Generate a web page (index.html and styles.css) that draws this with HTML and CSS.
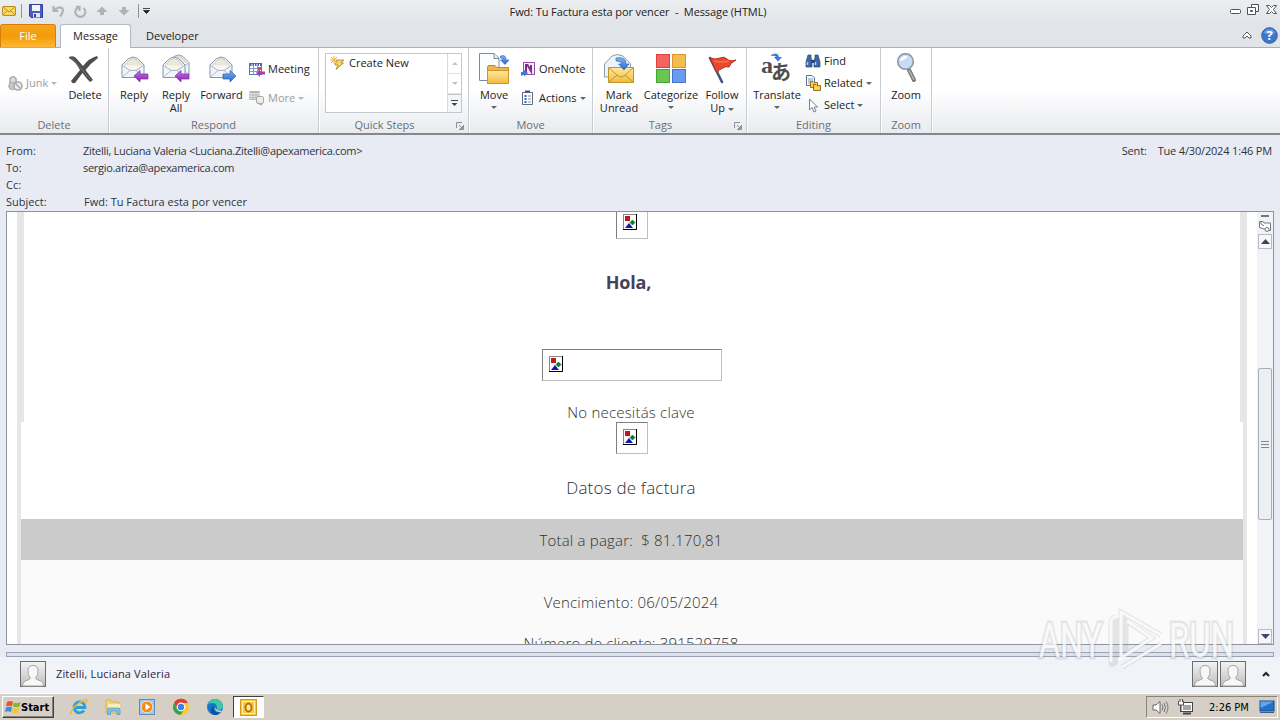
FILE: index.html
```html
<!DOCTYPE html>
<html lang="en">
<head>
    <meta charset="UTF-8">
    <meta name="viewport" content="width=device-width, initial-scale=1.0">
    <title>Fwd: Tu Factura esta por vencer - Message (HTML)</title>
    <link rel="stylesheet" href="styles.css">
</head>
<body>

    <!-- shared icons -->
    <svg class="defs" width="0" height="0">
        <defs>
            <linearGradient id="gold" x1="0" y1="0" x2="0" y2="1"><stop offset="0" stop-color="#ffe9a0"/><stop offset="1" stop-color="#f3ba3c"/></linearGradient>
            <linearGradient id="purple" x1="0" y1="0" x2="0" y2="1"><stop offset="0" stop-color="#c07be0"/><stop offset="1" stop-color="#8a1fb4"/></linearGradient>
            <linearGradient id="blue" x1="0" y1="0" x2="0" y2="1"><stop offset="0" stop-color="#7db4f4"/><stop offset="1" stop-color="#2a66cc"/></linearGradient>
            <linearGradient id="grey" x1="0" y1="0" x2="0" y2="1"><stop offset="0" stop-color="#f4f4f4"/><stop offset="1" stop-color="#bdbdbd"/></linearGradient>
            <symbol id="envelope" viewBox="0 0 24 24">
                <path d="M1 9 7.500 2.500Q12-.5 16.500 2.500L23 9V21.500H1Z" fill="#f1f5fb" stroke="#8695ad"/>
                <path d="M3 10 8 4Q12 1 16 4L21 10 15 14H9Z" fill="#eae8d8" stroke="#c9c5b2" stroke-width=".8"/>
                <path d="M1.500 9.500 9 14.500H15L22.500 9.500M1.500 21 9 14.500M22.500 21 15 14.500" fill="#fff" fill-opacity=".6" stroke="#9aabc4" stroke-width=".8"/>
            </symbol>
            <symbol id="noimg" viewBox="0 0 14 16">
                <rect x=".5" y=".5" width="13" height="15" fill="#fff" stroke="#888"/>
                <path d="M13.500 0V15.500H0" fill="none" stroke="#000"/>
                <rect x="2" y="2" width="5" height="5" fill="#c01818"/>
                <path d="M7 8.500 9.500 6 12 8.500 9.500 11Z" fill="#107a2c" stroke="#107a2c" stroke-width=".7"/>
                <path d="M2 14 6 9 10 14Z" fill="#1414b4"/>
            </symbol>
            <symbol id="person" viewBox="0 0 26 26">
                <rect x=".5" y=".5" width="25" height="25" fill="url(#grey)" stroke="#6d6d6d"/>
                <path d="M2.500 25Q2.500 20 8 19L10.500 17.500Q7.500 14 8 9 8.500 4.500 13 4.500T18 9Q18.500 14 15.500 17.500L18 19Q23.500 20 23.500 25Z" fill="#f7f7f7" stroke="#a5a5a5"/>
            </symbol>
            <symbol id="launcher" viewBox="0 0 8 8">
                <path d="M.5 6V.5H6M3 3 6 6M7.500 3V7.500H3M6.500 4V6.500H4" fill="none" stroke="#8a9099"/>
            </symbol>
        </defs>
    </svg>

    <div class="window">

        <header class="titlebar">
            <div class="quick-access">
                <svg width="14" height="12" viewBox="0 0 14 12"><rect x=".5" y="1.500" width="13" height="9" rx="1" fill="#fbd862" stroke="#b88c1c"/><path d="M1 2 7 7 13 2M1 10 5 6M13 10 9 6" fill="none" stroke="#c48e1c"/></svg>
                <i class="bar"></i>
                <svg class="save" width="14" height="14" viewBox="0 0 14 14"><path d="M.5.5H13.500V13.500H2L.5 12Z" fill="#4a5cc6" stroke="#30409a"/><rect x="3" y="1" width="8" height="6" fill="#f4f7ff"/><rect x="4" y="9" width="7" height="4.500" fill="#dfe4f4"/><rect x="5" y="10" width="2" height="3" fill="#30409a"/></svg>
                <svg class="undo" width="13" height="13" viewBox="0 0 13 13"><path d="M1.500 1V6H6.500M2 5.500Q6 1 10 3 12.500 6 8 11.500" fill="none" stroke="#b0b2b5" stroke-width="2.200"/></svg>
                <svg class="redo" width="13" height="13" viewBox="0 0 13 13"><path d="M4 2.500A5 5 0 1 0 9.500 3M2 1.800H5.500V6" fill="none" stroke="#b0b2b5" stroke-width="2.200"/></svg>
                <svg class="up" width="12" height="10" viewBox="0 0 12 10"><path d="M6 .5 11.500 6H8V9H4V6H.5Z" fill="#b0b2b5"/></svg>
                <svg class="down" width="12" height="10" viewBox="0 0 12 10"><path d="M6 9.500 11.500 4H8V1H4V4H.5Z" fill="#b0b2b5"/></svg>
                <i class="bar"></i>
                <svg class="customize" width="7" height="6" viewBox="0 0 7 6"><path d="M0 .5H7M.5 2.500H6.500L3.500 5.500Z" fill="#222" stroke="#222" stroke-width=".8"/></svg>
            </div>
            <h1 class="title">Fwd: Tu Factura esta por vencer &nbsp;- &nbsp;Message (HTML)</h1>
            <div class="window-buttons">
                <svg width="48" height="14" viewBox="0 0 48 14" fill="#fff" stroke="#4c5460"><rect x="1.500" y="7.500" width="10" height="4" rx="1"/><path d="M22.500 2.500H29.500V9.500H22.500Z"/><path d="M18.500 5.500H26.500V12.500H18.500ZM21.500 8.500H23.500V9.500H21.500Z"/><path d="M37.500 3.500H40.500L42.500 5.500 44.500 3.500H47.500L44.500 7.500 47.500 11.500H44.500L42.500 9.500 40.500 11.500H37.500L40.500 7.500Z"/></svg>
            </div>
        </header>

        <nav class="tabs">
            <div class="tab file">File</div>
            <div class="tab active">Message</div>
            <div class="tab">Developer</div>
            <div class="help">
                <svg width="10" height="8" viewBox="0 0 10 8"><path d="M5 1 9 5V7H7L5 5 3 7H1V5Z" fill="#fff" stroke="#555"/></svg>
                <svg width="17" height="17" viewBox="0 0 17 17"><circle cx="8.500" cy="8.500" r="7.800" fill="#3b77cc" stroke="#2d5fae"/><path d="M2.500 6A6.500 6.500 0 0 1 14.500 6Q9 9 2.500 6Z" fill="#7eabea" opacity=".6"/><text x="8.500" y="13.300" text-anchor="middle" class="help-mark">?</text></svg>
            </div>
        </nav>

        <section class="ribbon">
            <div class="group g-delete">
                <div class="tools">
                    <div class="small-col middle junk">
                        <div class="small off">
                            <svg width="15" height="16" viewBox="0 0 15 16"><path d="M2 9V3.500Q5 0 8 3.500V7" fill="#ddd" stroke="#aaa" stroke-width="1.500"/><circle cx="4.500" cy="11" r="3.800" fill="#c8c8c8" stroke="#aaa"/><circle cx="10" cy="11" r="4" fill="#eee" stroke="#aaa" stroke-width="1.600"/><path d="M7.500 8.500 12.500 13.500" stroke="#aaa" stroke-width="1.600"/></svg>
                            <span>Junk</span><i class="caret"></i>
                        </div>
                    </div>
                    <div class="big b-delete">
                        <svg width="32" height="32" viewBox="0 0 32 32"><path d="M2 4Q6 2 9 5L16 13Q22 5 30 3L31 5Q24 10 18.500 17L26 27 23 29Q19 25 15.500 20L8 30Q5 31 4 28L13 17Q8 8 2 5Z" fill="#4d4d4d"/><path d="M4 4 24 27" stroke="#777" stroke-width=".8"/></svg>
                        <span>Delete</span>
                    </div>
                </div>
                <div class="label">Delete</div>
            </div>

            <div class="group g-respond">
                <div class="tools">
                    <div class="big b-reply">
                        <svg width="32" height="32" viewBox="0 0 32 32"><use href="#envelope" x="3" y="3" width="24" height="24"/><path d="M16 23 22 17.500V21H30V26H22V29Z" fill="url(#purple)" stroke="#7c2da0" stroke-width=".7"/></svg>
                        <span>Reply</span>
                    </div>
                    <div class="big b-all">
                        <svg width="32" height="32" viewBox="0 0 32 32"><use href="#envelope" x="7" y="1" width="23" height="23"/><use href="#envelope" x="2" y="3" width="24" height="24"/><path d="M15 23 21 17.500V21H29V26H21V29Z" fill="url(#purple)" stroke="#7c2da0" stroke-width=".7"/></svg>
                        <span>Reply<br>All</span>
                    </div>
                    <div class="big b-forward">
                        <svg width="32" height="32" viewBox="0 0 32 32"><use href="#envelope" x="3" y="3" width="24" height="24"/><path d="M30 23 24 17.500V21H17V26H24V29Z" fill="url(#blue)" stroke="#2c5da9" stroke-width=".7"/></svg>
                        <span>Forward</span>
                    </div>
                    <div class="small-col two">
                        <div class="small">
                            <svg width="16" height="16" viewBox="0 0 16 16"><rect x=".5" y="2.500" width="12" height="11" fill="#fff" stroke="#5577bb"/><path d="M1 3.500H12.500" stroke="#3d63b0" stroke-width="3" stroke-dasharray="1.500 1"/><path d="M1 7.500H12M1 10.500H12M4.500 5V13M8.500 5V13" stroke="#7f9cd0"/><path d="M7 12 11 8V10.500H16V13.500H11V16Z" fill="#a43cc0"/><rect x="9" y="6" width="3" height="3" fill="#e24444"/></svg>
                            <span>Meeting</span>
                        </div>
                        <div class="small off">
                            <svg width="16" height="16" viewBox="0 0 16 16"><rect x="1" y="1.500" width="9" height="8" fill="#eee" stroke="#b5b5b5"/><path d="M1 2.500H10M1 5H10M1 7.500H10M4 2V10M7 2V10" stroke="#b5b5b5"/><rect x="7.500" y="6.500" width="7" height="7" rx="1.500" fill="#eee" stroke="#aaa"/><path d="M9 13 13 15" stroke="#aaa" stroke-width="1.500"/></svg>
                            <span>More</span><i class="caret"></i>
                        </div>
                    </div>
                </div>
                <div class="label">Respond</div>
            </div>

            <div class="group g-steps">
                <div class="tools">
                    <div class="gallery">
                        <div class="gallery-item">
                            <svg width="15" height="14" viewBox="0 0 15 14"><path d="M4 0V8M0 4H8M1 1 7 7M7 1 1 7" stroke="#efb52a"/><path d="M7 4 14 4 11 7 13.500 7 6 13.500 8 9H5Z" fill="#f8d45e" stroke="#a6842c" stroke-width=".8"/></svg>
                            <span>Create New</span>
                        </div>
                        <div class="gallery-scroll">
                            <div><i class="caret flip"></i></div>
                            <div><i class="caret"></i></div>
                            <div class="more"><svg width="7" height="7" viewBox="0 0 7 7"><path d="M0 .5H7" stroke="#444"/><path d="M.5 3H6.500L3.500 6Z" fill="#444"/></svg></div>
                        </div>
                    </div>
                </div>
                <div class="label with-launch">Quick Steps<svg class="launch" width="8" height="8"><use href="#launcher"/></svg></div>
            </div>

            <div class="group g-move">
                <div class="tools">
                    <div class="big b-move">
                        <svg width="32" height="32" viewBox="0 0 32 32"><path d="M1.500.5H16L21 5V27.500H1.500Z" fill="#fcfdff" stroke="#7c8ba2"/><path d="M16 .5V5.500H21" fill="#e8eef8" stroke="#7c8ba2"/><path d="M9.500 14.500Q9.500 12.500 11 12.500H17L19 14.500H30.500V30.500H9.500Z" fill="#eeb54c" stroke="#c48728"/><path d="M9.500 17.500H30.500V30.500H9.500Z" fill="url(#gold)" stroke="#cf942f"/><path d="M22.500 3Q28 1 28 7H31L27 11.500 22.500 7H25Q25 5 22.500 5Z" fill="url(#blue)" stroke="#2b63b8" stroke-width=".6"/></svg>
                        <span>Move</span><i class="caret"></i>
                    </div>
                    <div class="small-col two">
                        <div class="small">
                            <svg width="16" height="16" viewBox="0 0 16 16"><rect x="3.500" y="1.500" width="11" height="12" fill="#f7ecfa" stroke="#9b4fa6"/><path d="M6 11.500V4H7.500L11 10V4" fill="none" stroke="#85288f" stroke-width="2"/><path d="M1 15V11H4V9L8 12 4 15.500V13.500" fill="#3f7bd8"/></svg>
                            <span>OneNote</span>
                        </div>
                        <div class="small">
                            <svg width="16" height="16" viewBox="0 0 16 16"><path d="M2.500 2.500H12.500V14.500H2.500Z" fill="#fff" stroke="#5e6e88"/><path d="M5 1.500H10" stroke="#46566e" stroke-width="2"/><path d="M4.500 6H6.500M4.500 9H6.500M4.500 12H6.500" stroke="#3566b4" stroke-width="1.800"/><path d="M8 6H11M8 9H11M8 12H11" stroke="#889"/></svg>
                            <span>Actions</span><i class="caret"></i>
                        </div>
                    </div>
                </div>
                <div class="label">Move</div>
            </div>

            <div class="group g-tags">
                <div class="tools">
                    <div class="big b-unread">
                        <svg width="32" height="32" viewBox="0 0 32 32"><path d="M1.500 11 9 3Q14 0 20 3L27.500 11V24H1.500Z" fill="#eef3fa" stroke="#8c9bb2"/><path d="M5.500 14.500H30.500V29.500H5.500Z" fill="url(#gold)" stroke="#c2952c"/><path d="M6 15 15 23Q18 25 21 23L30 15M6 29 14 22M30 29 22 22" fill="none" stroke="#c2952c"/><path d="M13 5Q23 3 23 11H26L21 17 15.500 11H18.500Q18 8 13 8Z" fill="url(#blue)" stroke="#2b63b8" stroke-width=".6"/></svg>
                        <span>Mark<br>Unread</span>
                    </div>
                    <div class="big b-cat">
                        <svg width="32" height="32" viewBox="0 0 32 32"><rect x="1.500" y="1.500" width="13" height="13" fill="#f16460" stroke="#e04038"/><rect x="17.500" y="1.500" width="13" height="13" fill="#f5bd50" stroke="#df9628"/><rect x="1.500" y="16.500" width="13" height="13" fill="#6ac552" stroke="#44a52f"/><rect x="17.500" y="16.500" width="13" height="13" fill="#6b9bee" stroke="#4474d0"/></svg>
                        <span>Categorize</span><i class="caret"></i>
                    </div>
                    <div class="big b-follow">
                        <svg width="32" height="32" viewBox="0 0 32 32"><path d="M4 5 16 29" stroke="#3d567f" stroke-width="2.600" stroke-linecap="round"/><path d="M4 5Q10 7 14 5T21 6 30 7Q24 10 23 14 19 13 17 15 13 16 11 20Z" fill="#e9482c" stroke="#b52d1b"/><path d="M8 8Q16 10 23 8" fill="none" stroke="#f8744f" stroke-width="1.500"/></svg>
                        <span>Follow<br>Up <i class="caret"></i></span>
                    </div>
                </div>
                <div class="label with-launch">Tags<svg class="launch" width="8" height="8"><use href="#launcher"/></svg></div>
            </div>

            <div class="group g-editing">
                <div class="tools">
                    <div class="big b-translate">
                        <div class="translate-icon">
                            <span class="glyph-a">a</span><span class="glyph-ja">あ</span>
                            <svg class="glyph-arrow" width="12" height="9" viewBox="0 0 12 9"><path d="M0 2Q7-2 8 4H11L7 8.500 3 4H5Q4 2 0 3Z" fill="#3d7bd6"/></svg>
                        </div>
                        <span>Translate</span><i class="caret"></i>
                    </div>
                    <div class="small-col three">
                        <div class="small">
                            <svg width="16" height="16" viewBox="0 0 16 16"><path d="M3 2H6V5L7 7V14H1V9ZM10 2H13L15 9V14H9V7L10 5Z" fill="#3f66a4" stroke="#27497f" stroke-width=".7"/><path d="M6 7H10V10H6Z" fill="#27497f"/><path d="M2.500 9V12M10.500 9V12" stroke="#b9d0f2" stroke-width="1.500"/></svg>
                            <span>Find</span>
                        </div>
                        <div class="small">
                            <svg width="16" height="16" viewBox="0 0 16 16"><path d="M1.500.5H7L9.500 3V10.500H1.500Z" fill="#fff" stroke="#58719c"/><path d="M3 4H8M3 6H8M3 8H8" stroke="#7b95c2"/><path d="M5.500 6.500H8L9 7.500H12.500V12.500H5.500Z" fill="#f7cf58" stroke="#9b7112"/><path d="M8.500 9.500H11L12 10.500H15.500V15.500H8.500Z" fill="#f7cf58" stroke="#9b7112"/></svg>
                            <span>Related</span><i class="caret"></i>
                        </div>
                        <div class="small">
                            <svg width="16" height="16" viewBox="0 0 16 16"><path d="M4.500 2V13L7 10.500 9 15 11 14 9 10H12.500Z" fill="#fff" stroke="#6f8099"/></svg>
                            <span>Select</span><i class="caret"></i>
                        </div>
                    </div>
                </div>
                <div class="label">Editing</div>
            </div>

            <div class="group g-zoom">
                <div class="tools">
                    <div class="big b-zoom">
                        <svg width="32" height="32" viewBox="0 0 32 32"><path d="M19 17 24 27" stroke="#747474" stroke-width="4" stroke-linecap="round"/><path d="M19 17 24 27" stroke="#b8b8b8" stroke-width="1.500"/><circle cx="15.500" cy="8.500" r="7.800" fill="#c6dcf6" stroke="#8d97a5" stroke-width="1.600"/><path d="M10 8A5.500 5.500 0 0 1 18 3.500Q13 8 10 8Z" fill="#fff"/></svg>
                        <span>Zoom</span>
                    </div>
                </div>
                <div class="label">Zoom</div>
            </div>
        </section>

        <section class="headers">
            <dl>
                <dt>From:</dt><dd class="from">Zitelli, Luciana Valeria &lt;Luciana.Zitelli@apexamerica.com&gt;</dd>
                <dt>To:</dt><dd class="to">sergio.ariza@apexamerica.com</dd>
                <dt>Cc:</dt><dd></dd>
                <dt>Subject:</dt><dd class="subject">Fwd: Tu Factura esta por vencer</dd>
            </dl>
            <div class="sent"><span>Sent:</span><span>Tue 4/30/2024 1:46 PM</span></div>
        </section>

        <main class="reader">
            <div class="mail">
                <div class="mail-top">
                    <div class="placeholder first"><svg width="14" height="16"><use href="#noimg"/></svg></div>
                    <h2>Hola,</h2>
                    <div class="placeholder wide"><svg width="14" height="16"><use href="#noimg"/></svg></div>
                    <p class="clave">No necesitás clave</p>
                </div>
                <div class="mail-data">
                    <div class="placeholder"><svg width="14" height="16"><use href="#noimg"/></svg></div>
                    <h3>Datos de factura</h3>
                    <p class="total">Total a pagar: &nbsp;$ 81.170,81</p>
                    <div class="details">
                        <p class="due">Vencimiento: 06/05/2024</p>
                        <p class="client">Número de cliente: 391529758</p>
                    </div>
                </div>
            </div>
            <div class="scrollbar">
                <div class="split"></div>
                <svg class="ruler" width="14" height="13" viewBox="0 0 14 13"><path d="M1.500 1.500H5L6 3H12.500V10.500H9L8 9 6 9 1.500 7.500Z" fill="#fff" stroke="#707884"/><path d="M3 1V4L6 6" fill="none" stroke="#707884"/><circle cx="9" cy="9.500" r="2" fill="#fff" stroke="#707884"/></svg>
                <div class="arrow"><svg width="9" height="5"><path d="M0 5 4.500 0 9 5Z" fill="#3f4650"/></svg></div>
                <div class="track"><div class="thumb"><i></i><i></i><i></i></div></div>
                <div class="arrow"><svg width="9" height="5"><path d="M0 0 4.500 5 9 0Z" fill="#3c4a66"/></svg></div>
            </div>
        </main>

        <div class="splitter"></div>

        <section class="people">
            <svg width="26" height="26"><use href="#person"/></svg>
            <span>Zitelli, Luciana Valeria</span>
            <div class="people-list">
                <svg width="26" height="26"><use href="#person"/></svg>
                <svg width="26" height="26"><use href="#person"/></svg>
                <svg class="expand" width="8" height="6" viewBox="0 0 8 6"><path d="M1 5 4 2 7 5" fill="none" stroke="#222" stroke-width="2"/></svg>
            </div>
        </section>

        <footer class="taskbar">
            <div class="start">
                <svg width="16" height="16" viewBox="0 0 16 16"><path d="M2 3Q5 1 8 3L7 7.500Q4 6 1 7.500Z" fill="#e8562a"/><path d="M9 3.500Q12 5 15.500 3L14.500 7.500Q11 9 8 7.500Z" fill="#7db935"/><path d="M1 8.500Q4 7 7 8.500L6 13Q3 11.500 0 13Z" fill="#3f8ae0"/><path d="M8 9Q11 10.500 14.500 8.500L13 13.500Q10 15 7 13.500Z" fill="#f8c22c"/></svg>
                <span>Start</span>
            </div>
            <div class="launchers">
                <svg width="18" height="18" viewBox="0 0 18 18"><path d="M14 12.500A5.500 5.500 0 1 1 15 9.500H4.500" fill="none" stroke="#2f9fdc" stroke-width="2.800"/><path d="M1 16.500Q0 12 8 6T17 2Q16 5 15 6" fill="none" stroke="#eebc34" stroke-width="1.500"/></svg>
                <svg width="18" height="18" viewBox="0 0 18 18"><path d="M2 2H7L8 4H15V15H2Z" fill="#f1d47a" stroke="#cfa648" stroke-width=".7"/><path d="M4 6H16V10H4Z" fill="#fbeeb5"/><path d="M3.500 16.500V11.500Q3.500 10 5 10H14Q16 10 16 12V16.500H13V13H6.500V16.500Z" fill="#7cc2e8" stroke="#4798c4" stroke-width=".7"/></svg>
                <svg width="18" height="18" viewBox="0 0 18 18"><rect x="1.500" y="1.500" width="15" height="15" fill="#a3c8ea" stroke="#5b8cb8"/><circle cx="9" cy="9" r="5.800" fill="#f38c1c" stroke="#fff" stroke-width=".6"/><path d="M7.500 5.500 12.500 9 7.500 12.500Z" fill="#fff"/></svg>
                <svg width="18" height="18" viewBox="0 0 18 18"><circle cx="9" cy="9" r="8" fill="#f9cb28"/><path d="M2 5A8 8 0 0 1 16 5H9L5.500 11Z" fill="#df3e30"/><path d="M2 5A8 8 0 0 0 8.500 17L12.500 11H5.500Z" fill="#37a350"/><circle cx="9" cy="9" r="3.800" fill="#3f7fea" stroke="#fff" stroke-width="1.200"/></svg>
                <svg width="18" height="18" viewBox="0 0 18 18"><circle cx="9" cy="9" r="8" fill="#1876c5"/><path d="M1.500 7Q4 1 9 1 16 1 17 8 17 12 12 12 10 12 11 10 11 5 6 5 3 5 1.500 7Z" fill="#3fc7a9"/><path d="M8 8Q6 12 10 14 13 15 15 13.500 12 18 7 16.500 3 14 6 9Z" fill="#104f9c"/><path d="M9 9Q9.500 13 16 12.800L15 14Q12 14.500 10 13 8 11.500 9 9Z" fill="#d5cfc5"/></svg>
                <div class="running">
                    <svg width="17" height="17" viewBox="0 0 17 17"><rect x=".5" y=".5" width="16" height="16" fill="#f9c63c" stroke="#d79a1c"/><rect x="2.500" y="2.500" width="12" height="12" fill="none" stroke="#fff0b6"/><ellipse cx="8.500" cy="8.500" rx="3" ry="4" fill="#fce9a0" stroke="#b06c08" stroke-width="1.800"/></svg>
                </div>
            </div>
            <div class="tray">
                <svg width="17" height="15" viewBox="0 0 17 15"><path d="M1 5H4L8 1.500V13.500L4 10H1Z" fill="#fff" stroke="#666"/><path d="M10 4.500Q12 7.500 10 10.500M12 3Q15 7.500 12 12M14 1.500Q18 7.500 14 13.500" fill="none" stroke="#777"/></svg>
                <svg width="17" height="16" viewBox="0 0 17 16"><rect x="3.500" y="3.500" width="12" height="9" fill="#fff" stroke="#444"/><rect x="6" y="6" width="8" height="5" fill="#a5a5a5"/><path d="M6 14.500H14" stroke="#444" stroke-width="2"/><path d="M1.500 2V6H6.500V2M3 0V3M5.500 0V3M4 6V13" fill="#fff" stroke="#555"/></svg>
                <span class="clock">2:26 PM</span>
                <svg width="16" height="14" viewBox="0 0 16 14"><rect x="1" y="1" width="14" height="10" fill="#2472c8" stroke="#17498a"/><path d="M1.500 8 14 2V1.500H1.500Z" fill="#5fa8ec"/><path d="M1 12.500H15" stroke="#3b5c88"/></svg>
            </div>
        </footer>

        <svg class="watermark" width="200" height="66" viewBox="0 0 200 66">
            <g class="wm-shade">
                <text x="3" y="49" textLength="63" lengthAdjust="spacingAndGlyphs">ANY</text>
                <text x="133" y="49" textLength="65" lengthAdjust="spacingAndGlyphs">RUN</text>
                <path d="M80 9Q75 10 75 14V54Q75 59 80 54V10M85 50V4L125 27M90 47V13L116 30 90 46M125 36 86 59"/>
            </g>
            <g class="wm-light">
                <text x="3" y="49" textLength="63" lengthAdjust="spacingAndGlyphs">ANY</text>
                <text x="133" y="49" textLength="65" lengthAdjust="spacingAndGlyphs">RUN</text>
                <path d="M80 9Q75 10 75 14V54M85 50V4L125 27M91 13 116 30 82 52M125 36 86 59"/>
            </g>
        </svg>
    </div>

</body>
</html>
```
FILE: styles.css
```css
* {
    box-sizing: border-box;
    margin: 0;
    padding: 0;
}

body {
    font-family: "Open Sans", "Noto Sans", sans-serif;
    font-size: 11px;
    line-height: 13px;
    color: #222;
    overflow: hidden;
}

svg {
    display: block;
    flex-shrink: 0;
}

.defs {
    position: absolute;
}

.window {
    position: relative;
    width: 1280px;
    height: 720px;
    display: flex;
    flex-direction: column;
    background: #e8ebf3;
    overflow: hidden;
}

/* title bar */
.titlebar {
    height: 24px;
    display: grid;
    grid-template-columns: 260px 1fr 260px;
    align-items: center;
    background: linear-gradient(#eceef1, #e1e4e8);
}

.quick-access {
    display: flex;
    align-items: center;
    padding: 0 0 2px 2px;
}

.bar {
    width: 1px;
    height: 14px;
    margin: 0 7px 0 5px;
    background: #8e9299;
}

.undo { margin-left: 9px; }
.redo { margin-left: 9px; }
.up { margin-left: 9px; }
.down { margin-left: 10px; margin-right: 3px; }
.customize { margin-left: -3px; }

.title {
    font-size: 11px;
    font-weight: normal;
    text-align: center;
    letter-spacing: -0.1px;
    padding: 0 4px 2px 0;
}

.window-buttons {
    display: flex;
    justify-content: flex-end;
    padding: 0 3px 7px 0;
}

/* tabs */
.tabs {
    height: 24px;
    display: flex;
    background: #e1e4e8;
    border-bottom: 1px solid #a9adb4;
}

.tab {
    height: 23px;
    line-height: 23px;
    padding: 0 15px;
}

.tab.file {
    width: 56px;
    margin-right: 4px;
    color: #fff;
    text-align: center;
    background: linear-gradient(#f6a51f, #f49a08 50%, #fdb735);
    border: 1px solid #d97d0a;
    border-bottom: none;
    border-radius: 3px 3px 0 0;
    line-height: 22px;
}

.tab.active {
    width: 71px;
    height: 24px;
    padding: 0;
    text-align: center;
    line-height: 22px;
    background: #fff;
    border: 1px solid #b4b8bf;
    border-bottom: none;
    border-radius: 3px 3px 0 0;
}

.help {
    margin-left: auto;
    display: flex;
    align-items: center;
    gap: 9px;
    padding: 0 2px 1px 0;
}

.help-mark {
    font: bold 13px "Open Sans", sans-serif;
    fill: #fff;
}

/* ribbon */
.ribbon {
    height: 87px;
    display: flex;
    background: linear-gradient(#fff 0, #fff 48%, #eff1f4 84%, #e8eaee);
    border-bottom: 2px solid #83878e;
}

.group {
    display: flex;
    flex-direction: column;
    border-right: 1px solid #c9ccd1;
    box-shadow: 1px 0 #fff;
}

.g-delete { width: 109px; }
.g-respond { width: 210px; }
.g-steps { width: 150px; }
.g-move { width: 124px; }
.g-tags { width: 154px; }
.g-editing { width: 134px; }
.g-zoom { width: 51px; }

.tools {
    height: 70px;
    display: flex;
    padding-top: 5px;
}

.label {
    display: flex;
    justify-content: center;
    position: relative;
    color: #6a7078;
    height: 14px;
}

.label.with-launch {
    padding-right: 18px;
}

.launch {
    position: absolute;
    right: 4px;
    top: 4px;
}

.big {
    display: flex;
    flex-direction: column;
    align-items: center;
    text-align: center;
}

.big > svg,
.translate-icon {
    margin-bottom: 3px;
}

.big span {
    white-space: nowrap;
}

.b-delete { width: 44px; margin-left: 1px; }
.b-delete > svg { margin-left: -4px; }
.b-reply { width: 42px; margin-left: 4px; }
.b-all { width: 42px; }
.b-forward { width: 49px; }
.b-move { width: 46px; margin-left: 2px; }
.b-unread { width: 48px; margin-left: 2px; }
.b-cat { width: 56px; }
.b-follow { width: 46px; }
.b-translate { width: 56px; margin-left: 2px; }
.b-zoom { width: 50px; }

.big > .caret {
    margin-top: 5px;
}

.caret {
    display: inline-block;
    border: 3px solid transparent;
    border-top-color: #666;
    border-bottom: none;
    vertical-align: middle;
}

.caret.flip {
    transform: rotate(180deg);
}

.small-col {
    display: flex;
    flex-direction: column;
    height: 60px;
}

.small-col.middle { justify-content: center; }

.small-col.two {
    padding-top: 8px;
    gap: 13px;
    margin-left: 3px;
}

.small-col.three {
    gap: 6px;
}

.small {
    display: flex;
    align-items: center;
    height: 16px;
    gap: 3px;
    white-space: nowrap;
}

.small span {
    padding-bottom: 2px;
}

.junk { margin-left: 8px; width: 54px; }

.off { color: #9b9b9b; }
.off .caret { border-top-color: #b5b5b5; }

.gallery {
    width: 137px;
    height: 60px;
    margin-left: 6px;
    display: flex;
    background: #fff;
    border: 1px solid #c3c7cd;
}

.gallery-item {
    flex: 1;
    display: flex;
    gap: 4px;
    padding: 2px 4px;
    white-space: nowrap;
}

.gallery-scroll {
    width: 14px;
    display: grid;
    grid-template-rows: 20px 20px 1fr;
    border-left: 1px solid #d8dade;
}

.gallery-scroll div {
    display: flex;
    align-items: center;
    justify-content: center;
    border-bottom: 1px solid #e0e2e5;
}

.gallery-scroll .caret { border-top-color: #c0c3c8; }

.gallery-scroll .more {
    background: #f4f5f7;
    border: 1px solid #c3c7cd;
    border-width: 1px 0 0;
}

/* the two letters overlap diagonally under a small arrow */
.translate-icon {
    position: relative;
    width: 32px;
    height: 32px;
    color: #4e4e4e;
}

.glyph-a,
.glyph-ja,
.glyph-arrow {
    position: absolute;
}

.glyph-a {
    left: 0;
    top: 0;
    font: bold 24px/24px "Liberation Serif", serif;
}

.glyph-ja {
    left: 10px;
    top: 6px;
    font: bold 20px/26px "Noto Sans CJK JP", sans-serif;
}

.glyph-arrow {
    left: 10px;
    top: 0;
}

/* message headers */
.headers {
    height: 76px;
    display: flex;
    justify-content: space-between;
    padding: 7px 8px 0 6px;
    color: #2e3440;
}

.headers dl {
    display: grid;
    grid-template-columns: 77px 1fr;
    grid-auto-rows: 17px;
    line-height: 17px;
}

.from { letter-spacing: -0.3px; }
.to { letter-spacing: -0.3px; }
.subject { padding-left: 1px; }

.sent {
    display: flex;
    gap: 11px;
    line-height: 17px;
    letter-spacing: -0.17px;
}

/* reading area */
.reader {
    width: 1268px;
    height: 434px;
    margin-left: 6px;
    display: flex;
    justify-content: space-between;
    background: #fff;
    border: 1px solid #8e939c;
    overflow: hidden;
}

.mail {
    width: 1230px;
    margin-left: 10px;
    text-align: center;
    color: #303030;
    font-size: 15px;
    font-weight: 300;
    letter-spacing: 0.2px;
    line-height: 20px;
}

.mail p {
    padding-right: 2px;
}

.mail-top {
    height: 210px;
    border: solid #e6e6e6;
    border-width: 0 7px;
}

.mail-data {
    border: solid #e6e6e6;
    border-width: 0 4px;
}

.placeholder {
    width: 32px;
    height: 32px;
    margin: 0 auto;
    padding: 6px;
    border: 1px solid #bfbfbf;
    border-top-color: #808080;
    border-left-color: #808080;
}

.placeholder.first {
    height: 27px;
    padding-top: 2px;
    border-top: none;
}

.placeholder.wide {
    width: 180px;
}

.mail h2 {
    margin: 33px 7px 57px 0;
    font-size: 18px;
    font-weight: bold;
    letter-spacing: -0.2px;
    color: #45415a;
}

.clave { margin-top: 21px; }

.mail h3 {
    margin: 24px 0 21px;
    padding-right: 2px;
    font-size: 17px;
    font-weight: 300;
}

.total {
    height: 41px;
    line-height: 43px;
    background: #cbcbcb;
}

.details {
    height: 200px;
    padding-top: 32px;
    background: #fafafa;
}

.client { margin-top: 21px; }

.scrollbar {
    width: 16px;
    display: flex;
    flex-direction: column;
    align-items: center;
    background: #f1f3f6;
}

.split {
    width: 8px;
    height: 2px;
    margin: 3px 0;
    background: #727983;
}

.ruler { margin-bottom: 1px; }

.arrow {
    width: 14px;
    height: 15px;
    display: flex;
    align-items: center;
    justify-content: center;
    background: #f5f7fa;
    border: 1px solid #b6bbc4;
}

.track {
    flex: 1;
    padding-top: 119px;
}

.thumb {
    width: 14px;
    height: 152px;
    display: flex;
    flex-direction: column;
    align-items: center;
    justify-content: center;
    gap: 2px;
    background: #eceff3;
    border: 1px solid #a9afb8;
    border-radius: 2px;
}

.thumb i {
    width: 8px;
    height: 1px;
    background: #828892;
}

.splitter {
    width: 1268px;
    height: 5px;
    margin: 7px 0 0 6px;
    background: #dce1ea;
    border: 1px solid #9ba2b4;
}

/* people pane */
.people {
    height: 36px;
    display: flex;
    align-items: center;
    gap: 10px;
    padding: 0 10px 2px 20px;
    background: #f0f3f7;
    color: #301c40;
}

.people span {
    padding-bottom: 1px;
    letter-spacing: 0.15px;
}

.people-list {
    margin-left: auto;
    display: flex;
    align-items: center;
    gap: 2px;
}

.expand { margin-left: 14px; }

/* taskbar */
.taskbar {
    height: 27px;
    display: flex;
    align-items: center;
    background: #d5cfc5;
    border-top: 1px solid #fff;
    font-family: "DejaVu Sans Condensed", "DejaVu Sans", sans-serif;
    color: #000;
}

.start {
    width: 52px;
    height: 22px;
    margin-left: 2px;
    padding-left: 2px;
    display: flex;
    align-items: center;
    border: 1px solid;
    border-color: #fff #404040 #404040 #fff;
    box-shadow: inset -1px -1px #88847c;
    font-weight: bold;
}

.launchers {
    display: flex;
    align-items: center;
    gap: 16px;
    padding-left: 16px;
}

.running {
    width: 31px;
    height: 22px;
    margin-left: -7px;
    display: flex;
    align-items: center;
    justify-content: center;
    background: #fff;
    border: 1px solid;
    border-color: #404040 #fff #fff #404040;
}

.tray {
    width: 132px;
    height: 22px;
    margin-left: auto;
    margin-right: 2px;
    padding-left: 5px;
    display: flex;
    align-items: center;
    border: 1px solid;
    border-color: #88847c #fff #fff #88847c;
    gap: 8px;
}

.clock {
    margin-left: 7px;
    margin-right: 2px;
}

/* watermark over the lower right corner */
.watermark {
    position: absolute;
    left: 1036px;
    top: 608px;
    font: 49px "Roboto", sans-serif;
}

.wm-shade {
    fill: none;
    stroke: #9a9da3;
    stroke-width: 5;
    opacity: 0.22;
}

.wm-light {
    fill: #fff;
    opacity: 0.8;
}

.wm-light path {
    fill: none;
    stroke: #fff;
    stroke-width: 3;
}
```
